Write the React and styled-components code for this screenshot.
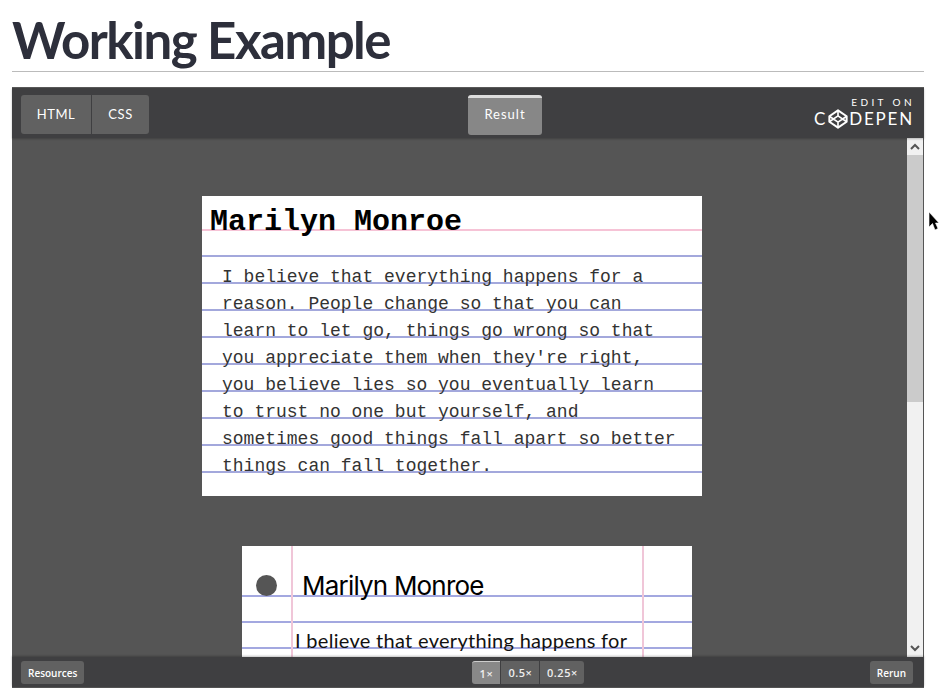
import styled, { createGlobalStyle } from "styled-components";

const GlobalStyle = createGlobalStyle`
  html, body {
    margin: 0;
    padding: 0;
    background: #fff;
    overflow: hidden;
  }
`;

const Page = styled.div`
  position: relative;
  width: 912px;
  height: 698px;
  padding-left: 12px;
  font-family: Lato, "Open Sans", sans-serif;
`;

const Title = styled.h1`
  margin: 0;
  height: 71px;
  border-bottom: 1px solid #bbb;
  box-sizing: content-box;
  color: #2d2f3b;
  font-family: Lato, sans-serif;
  font-size: 51px;
  font-weight: 700;
  line-height: 80px;
  letter-spacing: -1.5px;
  white-space: nowrap;
  overflow: visible;
`;

const Embed = styled.div`
  margin-top: 15px;
  height: 599px;
  display: flex;
  flex-direction: column;
  background: #555;
  border-top: 1px solid #5a5a5a;
  border-bottom: 1px solid #555;
  box-sizing: content-box;
`;

const TopBar = styled.div`
  height: 50px;
  flex: none;
  display: flex;
  align-items: flex-start;
  padding: 7px 12px 0 9px;
  box-sizing: border-box;
  background: #3f3f41;
  box-shadow: 0 1px 2px rgba(0, 0, 0, 0.25);
  position: relative;
  z-index: 1;
`;

const TabGroup = styled.div`
  display: flex;
  gap: 1px;
  background: #3f3f41;
`;

const Tab = styled.div`
  width: ${(p) => p.$w}px;
  height: 39px;
  box-sizing: border-box;
  padding-bottom: 2px;
  display: flex;
  align-items: center;
  justify-content: center;
  background: #616161;
  color: #fff;
  font-size: 13px;
  letter-spacing: 0.6px;
  border-radius: ${(p) => p.$radius};
`;

const ResultTab = styled.div`
  margin-left: 319px;
  width: 74px;
  height: 40px;
  box-sizing: border-box;
  display: flex;
  align-items: center;
  justify-content: center;
  background: #878787;
  border-top: 3px solid #ddd;
  border-radius: 3px;
  color: #fff;
  font-size: 13px;
  letter-spacing: 1px;
  padding-bottom: 5px;
`;

const Logo = styled.div`
  margin-left: auto;
  margin-top: 1px;
  display: flex;
  flex-direction: column;
  align-items: flex-end;
  color: #fff;
`;

const EditOn = styled.div`
  font-size: 10px;
  line-height: 12px;
  letter-spacing: 3.4px;
  margin-right: -3px;
`;

const Wordmark = styled.div`
  display: flex;
  align-items: center;
  font-size: 17px;
  font-weight: 400;
  line-height: 22px;
  letter-spacing: 1.8px;
  margin-right: -2px;
`;

const Mark = styled.svg`
  margin: 0 1px 0 1px;
`;

const Viewport = styled.div`
  flex: 1;
  min-height: 0;
  display: flex;
  overflow: hidden;
`;

const Frame = styled.div`
  flex: 1;
  min-width: 0;
  overflow: hidden;
  padding-top: 58px;
  background: #555;
`;

const Sheet = styled.div`
  position: relative;
  box-sizing: border-box;
  margin-left: ${(p) => p.$left}px;
  width: ${(p) => p.$w}px;
  height: ${(p) => p.$h}px;
  margin-bottom: 50px;
  background-color: #fff;
`;

const TypedSheet = styled(Sheet)`
  padding: 10px 8px 0;
  background-image:
    linear-gradient(#f6c3d6, #f6c3d6),
    repeating-linear-gradient(
      to bottom,
      transparent 0,
      transparent 25px,
      #a3a8dc 25px,
      #a3a8dc 27px
    );
  background-size: 100% 2px, 100% 243px;
  background-position: 0 33px, 0 34px;
  background-repeat: no-repeat;
`;

const TypedName = styled.h2`
  margin: 0;
  font-family: "Liberation Mono", monospace;
  font-size: 30px;
  font-weight: 700;
  line-height: 33px;
  color: #000;
`;

const TypedText = styled.p`
  margin: 25px 0 0 12px;
  width: 458px;
  font-family: "Liberation Mono", monospace;
  font-size: 18px;
  line-height: 27px;
  color: #333;
`;

const HandSheet = styled(Sheet)`
  overflow: hidden;
  background-image:
    linear-gradient(#f0c6d8, #f0c6d8),
    linear-gradient(#f0c6d8, #f0c6d8),
    repeating-linear-gradient(
      to bottom,
      transparent 0,
      transparent 24.5px,
      #a3a8e0 24.5px,
      #a3a8e0 26.5px
    );
  background-size: 2px 100%, 2px 100%, 100% 100%;
  background-position: 49px 0, 400px 0, 0 23.5px;
  background-repeat: no-repeat;
`;

const Hole = styled.div`
  position: absolute;
  left: 14px;
  top: 29px;
  width: 21px;
  height: 21px;
  border-radius: 50%;
  background: #555;
`;

const HandName = styled.h2`
  margin: 0;
  padding: 24px 0 0 60px;
  font-family: Inter, Lato, sans-serif;
  font-size: 26px;
  font-weight: 400;
  line-height: 32px;
  letter-spacing: -0.8px;
  color: #000;
`;

const HandText = styled.p`
  margin: 25px 0 0 53px;
  width: 340px;
  font-family: Lato, sans-serif;
  font-size: 20px;
  font-weight: 400;
  line-height: 27px;
  letter-spacing: 0.3px;
  color: #111;
`;

const Scrollbar = styled.div`
  flex: none;
  width: 16px;
  margin-right: 1px;
  display: flex;
  flex-direction: column;
  background: #f1f1f1;
`;

const ScrollButton = styled.div`
  height: 17px;
  flex: none;
  display: flex;
  align-items: center;
  justify-content: center;
  background: #f1f1f1;
`;

const ScrollThumb = styled.div`
  height: 247px;
  flex: none;
  background: #cbcbcb;
`;

const ScrollTrack = styled.div`
  flex: 1;
`;

const BottomBar = styled.div`
  height: 30px;
  flex: none;
  display: flex;
  align-items: flex-start;
  padding: 4px 11px 0 9px;
  box-sizing: border-box;
  background: #3f3f41;
  box-shadow: 0 -1px 2px rgba(0, 0, 0, 0.25);
  position: relative;
`;

const SmallButton = styled.div`
  height: 23px;
  padding: 0 7px;
  display: flex;
  align-items: center;
  background: #616161;
  border-radius: 3px;
  color: #fff;
  font-family: "Open Sans", sans-serif;
  font-size: 10px;
  font-weight: 600;
`;

const ZoomGroup = styled.div`
  margin-left: 388px;
  margin-right: auto;
  display: flex;
  gap: 1px;
`;

const ZoomButton = styled.div`
  width: ${(p) => p.$w}px;
  height: 23px;
  box-sizing: border-box;
  display: flex;
  align-items: center;
  justify-content: center;
  background: ${(p) => (p.$active ? "#888" : "#616161")};
  border-top: ${(p) => (p.$active ? "1px solid #ccc" : "0")};
  border-radius: ${(p) => p.$radius};
  color: #eee;
  font-family: "Open Sans", sans-serif;
  font-size: 11px;
  font-weight: 600;
  letter-spacing: 0.5px;
`;

const Cursor = styled.svg`
  position: absolute;
  left: 928px;
  top: 212px;
`;

function CodepenMark() {
  return (
    <Mark width="20" height="20" viewBox="0 0 22 22" fill="none" stroke="#fff" strokeWidth="2.200" strokeLinejoin="round">
      <path d="M11 1.500 20.500 8v6L11 20.500 1.500 14V8Z" />
      <path d="M11 1.500V7.500M11 14.500V20.500M1.500 8 11 14.500 20.500 8M1.500 14 11 7.500 20.500 14" strokeWidth="1.800" />
    </Mark>
  );
}

function Chevron({ up }) {
  return (
    <svg width="10" height="7" viewBox="0 0 10 7" fill="none" stroke="#555" strokeWidth="2">
      <path d={up ? "M1 6 5 2l4 4" : "M1 1l4 4 4-4"} />
    </svg>
  );
}

export default function App() {
  return (
    <Page>
      <GlobalStyle />
      <Title>Working Example</Title>
      <Embed>
        <TopBar>
          <TabGroup>
            <Tab $w={70} $radius="3px 0 0 3px">HTML</Tab>
            <Tab $w={57} $radius="0 3px 3px 0">CSS</Tab>
          </TabGroup>
          <ResultTab>Result</ResultTab>
          <Logo>
            <EditOn>EDIT ON</EditOn>
            <Wordmark>
              C
              <CodepenMark />
              DEPEN
            </Wordmark>
          </Logo>
        </TopBar>
        <Viewport>
          <Frame>
            <TypedSheet $left={190} $w={500} $h={300}>
              <TypedName>Marilyn Monroe</TypedName>
              <TypedText>
                I believe that everything happens for a reason. People change so that you can learn to let go, things go wrong so that you appreciate them when they're right, you believe lies so you eventually learn to trust no one but yourself, and sometimes good things fall apart so better things can fall together.
              </TypedText>
            </TypedSheet>
            <HandSheet $left={230} $w={450} $h={300}>
              <Hole />
              <HandName>Marilyn Monroe</HandName>
              <HandText>
                I believe that everything happens for a reason. People change so that you can learn to let go.
              </HandText>
            </HandSheet>
          </Frame>
          <Scrollbar>
            <ScrollButton><Chevron up /></ScrollButton>
            <ScrollThumb />
            <ScrollTrack />
            <ScrollButton><Chevron /></ScrollButton>
          </Scrollbar>
        </Viewport>
        <BottomBar>
          <SmallButton>Resources</SmallButton>
          <ZoomGroup>
            <ZoomButton $w={28} $active $radius="3px 0 0 3px">1×</ZoomButton>
            <ZoomButton $w={38} $radius="0">0.5×</ZoomButton>
            <ZoomButton $w={44} $radius="0 3px 3px 0">0.25×</ZoomButton>
          </ZoomGroup>
          <SmallButton>Rerun</SmallButton>
        </BottomBar>
      </Embed>
      <Cursor width="12" height="19" viewBox="0 0 12 19">
        <path d="M1 0v15l3.500-3.500L7 18l3-1.500-2.500-5.500H11Z" fill="#000" stroke="#fff" strokeWidth="0.600" />
      </Cursor>
    </Page>
  );
}
